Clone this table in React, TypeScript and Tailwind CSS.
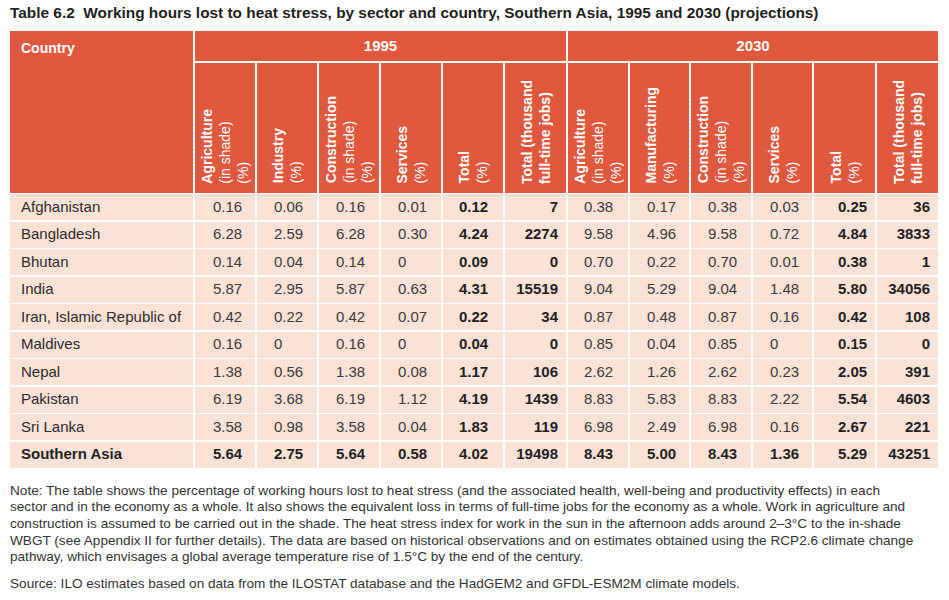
import React from "react";

type HeadLine = { t: string; b?: boolean };

const heads1995: HeadLine[][] = [
  [{ t: "Agriculture", b: true }, { t: "(in shade)" }, { t: "(%)" }],
  [{ t: "Industry", b: true }, { t: "(%)" }],
  [{ t: "Construction", b: true }, { t: "(in shade)" }, { t: "(%)" }],
  [{ t: "Services", b: true }, { t: "(%)" }],
  [{ t: "Total", b: true }, { t: "(%)" }],
  [{ t: "Total (thousand", b: true }, { t: "full-time jobs)", b: true }],
];

const heads2030: HeadLine[][] = [
  [{ t: "Agriculture", b: true }, { t: "(in shade)" }, { t: "(%)" }],
  [{ t: "Manufacturing", b: true }, { t: "(%)" }],
  [{ t: "Construction", b: true }, { t: "(in shade)" }, { t: "(%)" }],
  [{ t: "Services", b: true }, { t: "(%)" }],
  [{ t: "Total", b: true }, { t: "(%)" }],
  [{ t: "Total (thousand", b: true }, { t: "full-time jobs)", b: true }],
];

const rows: [string, string[]][] = [
  ["Afghanistan", ["0.16", "0.06", "0.16", "0.01", "0.12", "7", "0.38", "0.17", "0.38", "0.03", "0.25", "36"]],
  ["Bangladesh", ["6.28", "2.59", "6.28", "0.30", "4.24", "2274", "9.58", "4.96", "9.58", "0.72", "4.84", "3833"]],
  ["Bhutan", ["0.14", "0.04", "0.14", "0", "0.09", "0", "0.70", "0.22", "0.70", "0.01", "0.38", "1"]],
  ["India", ["5.87", "2.95", "5.87", "0.63", "4.31", "15519", "9.04", "5.29", "9.04", "1.48", "5.80", "34056"]],
  ["Iran, Islamic Republic of", ["0.42", "0.22", "0.42", "0.07", "0.22", "34", "0.87", "0.48", "0.87", "0.16", "0.42", "108"]],
  ["Maldives", ["0.16", "0", "0.16", "0", "0.04", "0", "0.85", "0.04", "0.85", "0", "0.15", "0"]],
  ["Nepal", ["1.38", "0.56", "1.38", "0.08", "1.17", "106", "2.62", "1.26", "2.62", "0.23", "2.05", "391"]],
  ["Pakistan", ["6.19", "3.68", "6.19", "1.12", "4.19", "1439", "8.83", "5.83", "8.83", "2.22", "5.54", "4603"]],
  ["Sri Lanka", ["3.58", "0.98", "3.58", "0.04", "1.83", "119", "6.98", "2.49", "6.98", "0.16", "2.67", "221"]],
  ["Southern Asia", ["5.64", "2.75", "5.64", "0.58", "4.02", "19498", "8.43", "5.00", "8.43", "1.36", "5.29", "43251"]],
];

// padding per data column (index 0..11)
const cellPad = [
  "pl-[18px]", "pl-[17px]", "pl-[17px]", "pl-[17px]", "pl-[16px]", "justify-end pr-[8px]",
  "pl-[16px]", "pl-[17px]", "pl-[17px]", "pl-[17px]", "pl-[24px]", "justify-end pr-[8px]",
];

function VHead({ lines }: { lines: HeadLine[] }) {
  return (
    <div className="bg-[#e0583e] flex items-end justify-center pb-[9px]">
      <div className="[writing-mode:vertical-rl] rotate-180 text-[14px] leading-[18px] text-white whitespace-nowrap">
        {lines.map((l, i) => (
          <div key={i} className={l.b ? "font-bold" : "font-normal"}>
            {l.t}
          </div>
        ))}
      </div>
    </div>
  );
}

export default function App() {
  return (
    <div className="w-[949px] h-[600px] bg-white text-[#2b2b2b] font-['Liberation_Sans',Arial,sans-serif] px-[10px] pt-[3px] overflow-hidden">
      <h1 className="text-[15.4px] font-bold leading-[19px] text-[#231f20] whitespace-nowrap">
        Table 6.2&nbsp;&nbsp;Working hours lost to heat stress, by sector and country, Southern Asia, 1995 and 2030 (projections)
      </h1>

      <div className="mt-[9px] grid grid-cols-[183px_60px_60px_60px_60px_60px_61px_60px_59px_60px_59px_61px_61px] grid-rows-[30px_130px] auto-rows-[26px] gap-x-[2px] gap-y-[1.5px] w-[928px]">
        <div className="row-span-2 bg-[#e0583e] text-white font-bold text-[14px] pl-[11px] pt-[7px]">Country</div>
        <div className="col-span-6 bg-[#e0583e] text-white font-bold text-[15px] flex items-center justify-center">1995</div>
        <div className="col-span-6 bg-[#e0583e] text-white font-bold text-[15px] flex items-center justify-center">2030</div>
        {heads1995.map((h, i) => (
          <VHead key={"a" + i} lines={h} />
        ))}
        {heads2030.map((h, i) => (
          <VHead key={"b" + i} lines={h} />
        ))}

        {rows.map(([name, vals], r) => {
          const agg = r === rows.length - 1;
          return (
            <React.Fragment key={name}>
              <div className={`bg-[#fae2d7] flex items-center pl-[11px] text-[15px] ${agg ? "font-bold text-[#1f1f1f]" : ""}`}>
                {name}
              </div>
              {vals.map((v, c) => {
                const bold = agg || c === 4 || c === 5 || c === 10 || c === 11;
                return (
                  <div
                    key={c}
                    className={`bg-[#fae2d7] flex items-center text-[15px] ${cellPad[c]} ${bold ? "font-bold text-[#1f1f1f]" : "text-[#3a3a3a]"}`}
                  >
                    {v}
                  </div>
                );
              })}
            </React.Fragment>
          );
        })}
      </div>

      <div className="mt-[15px] text-[13.6px] leading-[16.7px] text-[#333] whitespace-nowrap">
        <p>
          Note: The table shows the percentage of working hours lost to heat stress (and the associated health, well-being and productivity effects) in each
          <br />
          sector and in the economy as a whole. It also shows the equivalent loss in terms of full-time jobs for the economy as a whole. Work in agriculture and
          <br />
          construction is assumed to be carried out in the shade. The heat stress index for work in the sun in the afternoon adds around 2–3°C to the in-shade
          <br />
          WBGT (see Appendix II for further details). The data are based on historical observations and on estimates obtained using the RCP2.6 climate change
          <br />
          pathway, which envisages a global average temperature rise of 1.5°C by the end of the century.
        </p>
        <p className="mt-[10px]">
          Source: ILO estimates based on data from the ILOSTAT database and the HadGEM2 and GFDL-ESM2M climate models.
        </p>
      </div>
    </div>
  );
}
